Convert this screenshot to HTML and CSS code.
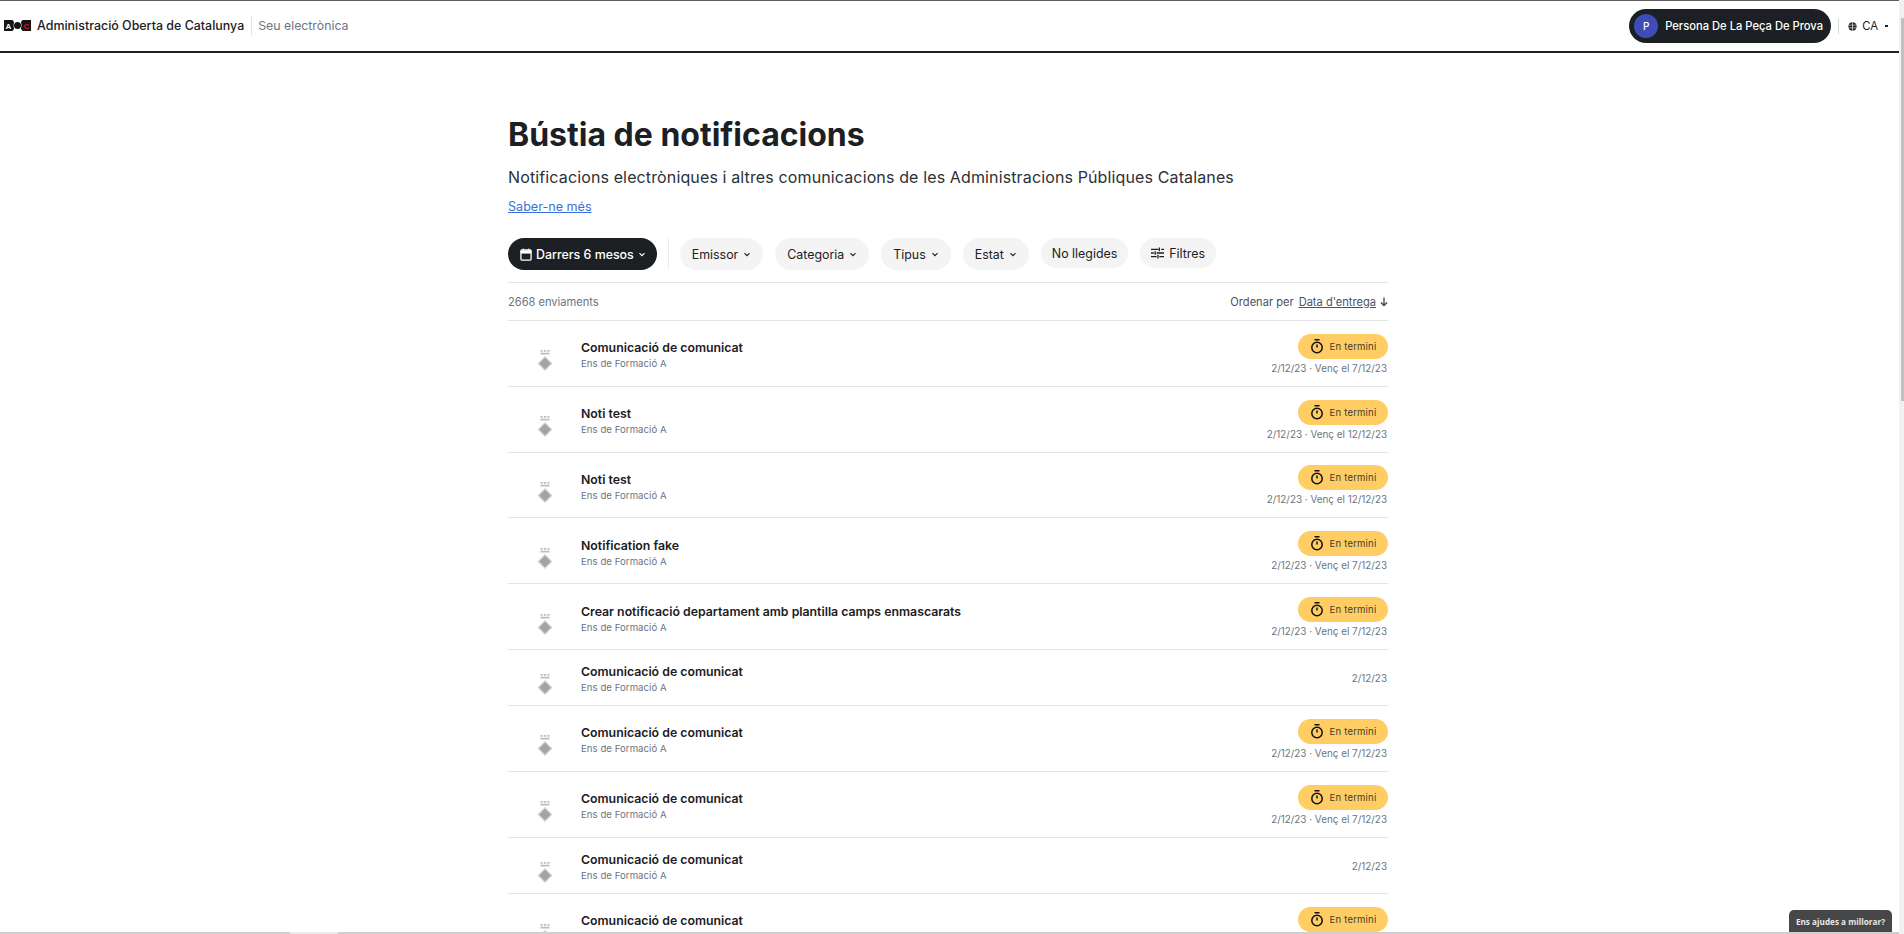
FILE: index.html
```html
<!DOCTYPE html>
<html lang="ca">
<head>
<meta charset="utf-8">
<title>Bústia de notificacions</title>
<link rel="stylesheet" href="styles.css">
</head>
<body>
<svg class="defs" width="0" height="0" aria-hidden="true">
  <symbol id="crest" viewBox="0 0 16 22"><path d="M3.500 0h2.200v1.800H3.500zM6.900 0h2.200v1.800H6.900zM10.300 0h2.200v1.800h-2.200zM3.500 2.800h9v1.600h-9z" fill="#bdbdbd"/><path d="M8 6l7.500 7.500L8 21 .5 13.500z" fill="#d2d2d2"/><path d="M8 7.800l5.700 5.700L8 19.200l-5.700-5.700z" fill="#a3a3a3"/></symbol>
  <symbol id="timer" viewBox="0 0 14 15"><circle cx="7" cy="8.500" r="5.200" fill="none" stroke="#111" stroke-width="1.500"/><path d="M4.500 .8h5M7 8.500V5.500" stroke="#111" stroke-width="1.500" fill="none"/></symbol>
  <symbol id="caret" viewBox="0 0 8 5"><path d="M1.500 1.200L4 3.700l2.500-2.500" fill="none" stroke="currentColor" stroke-width="1.100"/></symbol>
</svg>
<div class="page">
<header class="topbar">
  <div class="brand">
    <svg class="aoc-logo" width="27" height="11" viewBox="0 0 27 11"><rect width="27" height="11" fill="#151515"/><path d="M8.500 0h10l-1.500 2 .5 3.500-.5 3.500 1.500 2h-10l1.500-2-.5-3.500.5-3.500z" fill="#fff"/><circle cx="13.500" cy="5.500" r="3.500" fill="#151515"/><text class="logo-a" x="4.500" y="8.500">A</text><text class="logo-c" x="22.500" y="8.500">C</text></svg>
    <span class="brand-name">Administració Oberta de Catalunya</span>
    <span class="brand-sep"></span>
    <span class="brand-sub">Seu electrònica</span>
  </div>
  <div class="top-right">
    <div class="user-pill"><span class="avatar">P</span><span class="user-name">Persona De La Peça De Prova</span></div>
    <span class="top-sep"></span>
    <div class="lang">
      <svg width="9" height="9" viewBox="0 0 10 10"><circle cx="5" cy="5" r="4.700" fill="#1c2024"/><path d="M0 3.500h10M0 6.500h10M5 0v10" stroke="#fff" stroke-width=".7"/></svg>
      <span>CA</span><span class="lang-caret"></span>
    </div>
  </div>
</header>
<main class="content">
  <h1 class="title">Bústia de notificacions</h1>
  <p class="subtitle">Notificacions electròniques i altres comunicacions de les Administracions Públiques Catalanes</p>
  <a class="more" href="#">Saber-ne més</a>
  <div class="filters">
    <button class="chip chip-dark"><svg width="12" height="13" viewBox="0 0 13 14"><path d="M2 2h9a1 1 0 0 1 1 1v9a1 1 0 0 1-1 1H2a1 1 0 0 1-1-1V3a1 1 0 0 1 1-1z" fill="none" stroke="#fff" stroke-width="1.400"/><path d="M1 3h11v2.500H1zM3.500 .5v2M9.500 .5v2" fill="#fff" stroke="#fff"/></svg>Darrers 6 mesos<svg class="caret" width="8" height="5"><use href="#caret"/></svg></button>
    <span class="filter-sep"></span>
    <button class="chip">Emissor<svg class="caret" width="8" height="5"><use href="#caret"/></svg></button>
    <button class="chip">Categoria<svg class="caret" width="8" height="5"><use href="#caret"/></svg></button>
    <button class="chip">Tipus<svg class="caret" width="8" height="5"><use href="#caret"/></svg></button>
    <button class="chip">Estat<svg class="caret" width="8" height="5"><use href="#caret"/></svg></button>
    <button class="chip chip-short">No llegides</button>
    <button class="chip chip-short"><svg width="13" height="12" viewBox="0 0 14 12"><path d="M0 2h8M11 2h3M0 6h3M6 6h8M0 10h6M9 10h5" stroke="#1c2024" stroke-width="1.400"/><path d="M9 0v4M4.500 4v4M7.500 8v4" stroke="#1c2024" stroke-width="1.400"/></svg>Filtres</button>
  </div>
  <div class="summary">
    <span>2668 enviaments</span>
    <span class="sort">Ordenar per <a href="#">Data d'entrega</a><svg width="8" height="10" viewBox="0 0 9 10"><path d="M4.500 0v9M1 5.500l3.500 3.500 3.500-3.500" fill="none" stroke="#3f4a56" stroke-width="1.500"/></svg></span>
  </div>
  <div class="list">
    <article class="row"><svg class="crest" width="16" height="22"><use href="#crest"/></svg><div class="row-main"><div class="row-title">Comunicació de comunicat</div><div class="row-from">Ens de Formació A</div></div><div class="row-side"><span class="badge"><svg width="14" height="15"><use href="#timer"/></svg>En termini</span><div class="row-date">2/12/23 · Venç el 7/12/23</div></div></article>
    <article class="row"><svg class="crest" width="16" height="22"><use href="#crest"/></svg><div class="row-main"><div class="row-title">Noti test</div><div class="row-from">Ens de Formació A</div></div><div class="row-side"><span class="badge"><svg width="14" height="15"><use href="#timer"/></svg>En termini</span><div class="row-date">2/12/23 · Venç el 12/12/23</div></div></article>
    <article class="row"><svg class="crest" width="16" height="22"><use href="#crest"/></svg><div class="row-main"><div class="row-title">Noti test</div><div class="row-from">Ens de Formació A</div></div><div class="row-side"><span class="badge"><svg width="14" height="15"><use href="#timer"/></svg>En termini</span><div class="row-date">2/12/23 · Venç el 12/12/23</div></div></article>
    <article class="row"><svg class="crest" width="16" height="22"><use href="#crest"/></svg><div class="row-main"><div class="row-title">Notification fake</div><div class="row-from">Ens de Formació A</div></div><div class="row-side"><span class="badge"><svg width="14" height="15"><use href="#timer"/></svg>En termini</span><div class="row-date">2/12/23 · Venç el 7/12/23</div></div></article>
    <article class="row"><svg class="crest" width="16" height="22"><use href="#crest"/></svg><div class="row-main"><div class="row-title">Crear notificació departament amb plantilla camps enmascarats</div><div class="row-from">Ens de Formació A</div></div><div class="row-side"><span class="badge"><svg width="14" height="15"><use href="#timer"/></svg>En termini</span><div class="row-date">2/12/23 · Venç el 7/12/23</div></div></article>
    <article class="row row-short"><svg class="crest" width="16" height="22"><use href="#crest"/></svg><div class="row-main"><div class="row-title">Comunicació de comunicat</div><div class="row-from">Ens de Formació A</div></div><div class="row-side"><div class="row-date">2/12/23</div></div></article>
    <article class="row"><svg class="crest" width="16" height="22"><use href="#crest"/></svg><div class="row-main"><div class="row-title">Comunicació de comunicat</div><div class="row-from">Ens de Formació A</div></div><div class="row-side"><span class="badge"><svg width="14" height="15"><use href="#timer"/></svg>En termini</span><div class="row-date">2/12/23 · Venç el 7/12/23</div></div></article>
    <article class="row"><svg class="crest" width="16" height="22"><use href="#crest"/></svg><div class="row-main"><div class="row-title">Comunicació de comunicat</div><div class="row-from">Ens de Formació A</div></div><div class="row-side"><span class="badge"><svg width="14" height="15"><use href="#timer"/></svg>En termini</span><div class="row-date">2/12/23 · Venç el 7/12/23</div></div></article>
    <article class="row row-short"><svg class="crest" width="16" height="22"><use href="#crest"/></svg><div class="row-main"><div class="row-title">Comunicació de comunicat</div><div class="row-from">Ens de Formació A</div></div><div class="row-side"><div class="row-date">2/12/23</div></div></article>
    <article class="row row-last"><svg class="crest" width="16" height="22"><use href="#crest"/></svg><div class="row-main"><div class="row-title">Comunicació de comunicat</div></div><div class="row-side"><span class="badge"><svg width="14" height="15"><use href="#timer"/></svg>En termini</span></div></article>
  </div>
</main>
</div>
<div class="feedback">Ens ajudes a millorar?</div>
<div class="vscroll"><span class="vthumb"></span></div>
<div class="hscroll"><span class="hthumb"></span><span class="hgap"></span><span class="hrest"></span></div>
</body>
</html>
```
FILE: styles.css
```css
* { box-sizing: border-box; }
html, body { margin: 0; height: 100%; overflow: hidden; }
body { font-family: Inter, "Liberation Sans", sans-serif; color: #1c2024; background: #fff; }
.defs { position: absolute; }
.page { height: 934px; overflow: hidden; border-top: 1px solid #5c5c5c; }
.topbar { height: 52px; display: flex; justify-content: space-between; align-items: center; border-bottom: 2px solid #1c2024; padding: 0 11px 0 4px; margin-right: 5px; }
.brand { display: flex; align-items: center; padding-bottom: 2px; }
.aoc-logo { margin-right: 6px; }
.logo-a { font: 700 8px "Liberation Sans", sans-serif; fill: #fff; text-anchor: middle; }
.logo-c { font: 700 8px "Liberation Sans", sans-serif; fill: #d5122b; text-anchor: middle; }
.brand-name { font-size: 12.45px; font-weight: 500; white-space: nowrap; }
.brand-sep { width: 1px; height: 19px; background: #e1e3e5; margin: 0 6px 0 7px; }
.brand-sub { font-size: 12.3px; color: #6b7580; white-space: nowrap; }
.top-right { display: flex; align-items: center; }
.user-pill { height: 34px; width: 202px; display: flex; align-items: center; gap: 7px; background: #1c2024; border-radius: 17px; padding: 0 5px; color: #fff; font-size: 11.2px; font-weight: 500; white-space: nowrap; }
.avatar { width: 24px; height: 24px; border-radius: 50%; background: #3e4db5; display: flex; align-items: center; justify-content: center; font-size: 10px; }
.top-sep { width: 1px; height: 16px; background: #d9dcdf; margin: 0 9px 0 7px; }
.lang { display: flex; align-items: center; gap: 5px; font-size: 11.3px; }
.lang-caret { width: 3px; height: 2px; background: #1c2024; margin-left: 2px; }
.content { width: 880px; margin: 0 0 0 508px; padding-top: 62px; }
.title { margin: 0; font-size: 32px; line-height: 40px; font-weight: 700; }
.subtitle { margin: 10px 0 0; font-size: 16px; line-height: 24px; letter-spacing: .13px; color: #2b3138; }
.more { display: inline-block; margin-top: 8px; font-size: 12.6px; line-height: 20px; color: #3b6fd8; }
.filters { margin-top: 21px; height: 45px; display: flex; align-items: flex-start; gap: 12px; border-bottom: 1px solid #e4e5e7; }
.chip { height: 32px; padding: 0 12px; border: 0; border-radius: 16px; background: #f4f4f5; display: flex; align-items: center; gap: 5px; font: 400 12.4px Inter, "Liberation Sans", sans-serif; color: #1c2024; white-space: nowrap; }
.chip-short { height: 30px; padding: 0 11px; }
.chip-dark { background: #1c2024; color: #fff; font-weight: 500; gap: 4px; padding: 0 11px 0 12px; }
.filter-sep { width: 1px; height: 32px; background: #eceded; margin: 0 -1px; }
.summary { height: 38px; display: flex; justify-content: space-between; align-items: center; border-bottom: 1px solid #e4e5e7; font-size: 11.1px; color: #6b7580; }
.sort { display: flex; align-items: center; gap: 4px; color: #4a535d; }
.sort a { color: #4a535d; margin-left: 1px; }
.row { height: 65.8px; padding-top: 2px; display: flex; align-items: center; border-bottom: 1px solid #e4e5e7; }
.row-short { height: 56px; }
.row-last { align-items: flex-start; padding-top: 13px; border-bottom: 0; }
.crest { margin: 14px 28px 0 29px; flex: none; }
.row-last .crest { margin-top: 17px; }
.row-last .row-main { margin-top: 5px; padding-top: 0; }
.row-main { flex: 1; padding-top: 2px; }
.row-title { font-size: 12.3px; line-height: 18px; font-weight: 600; }
.row-from { font-size: 9.6px; line-height: 14px; color: #6b7580; letter-spacing: .05px; }
.row-side { display: flex; flex-direction: column; align-items: flex-end; gap: 2px; }
.badge { height: 25px; width: 90px; border-radius: 13px; background: #ffcd63; display: flex; align-items: center; justify-content: center; gap: 6px; font-size: 9.5px; color: #3d3d2e; letter-spacing: .2px; white-space: nowrap; }
.row-date { font-size: 9.9px; line-height: 14px; color: #6b7580; white-space: nowrap; padding-right: 1px; }
.feedback { position: fixed; right: 12px; bottom: 2px; width: 103px; height: 22px; background: #474747; border-radius: 5px 5px 0 0; color: #e8e8e8; font: 700 8.2px "Open Sans", sans-serif; display: flex; align-items: center; justify-content: center; white-space: nowrap; }
.vscroll { position: fixed; top: 0; right: 0; bottom: 0; width: 5px; background: #f1f1f1; }
.vthumb { display: block; margin: 18px 0 0 2px; height: 383px; background: #c1c1c1; }
.hscroll { position: fixed; left: 0; right: 5px; bottom: 0; height: 2px; display: flex; }
.hthumb { width: 290px; background: #cfcfcf; }
.hgap { width: 48px; background: #ececec; }
.hrest { flex: 1; background: #cfcfcf; }
```
